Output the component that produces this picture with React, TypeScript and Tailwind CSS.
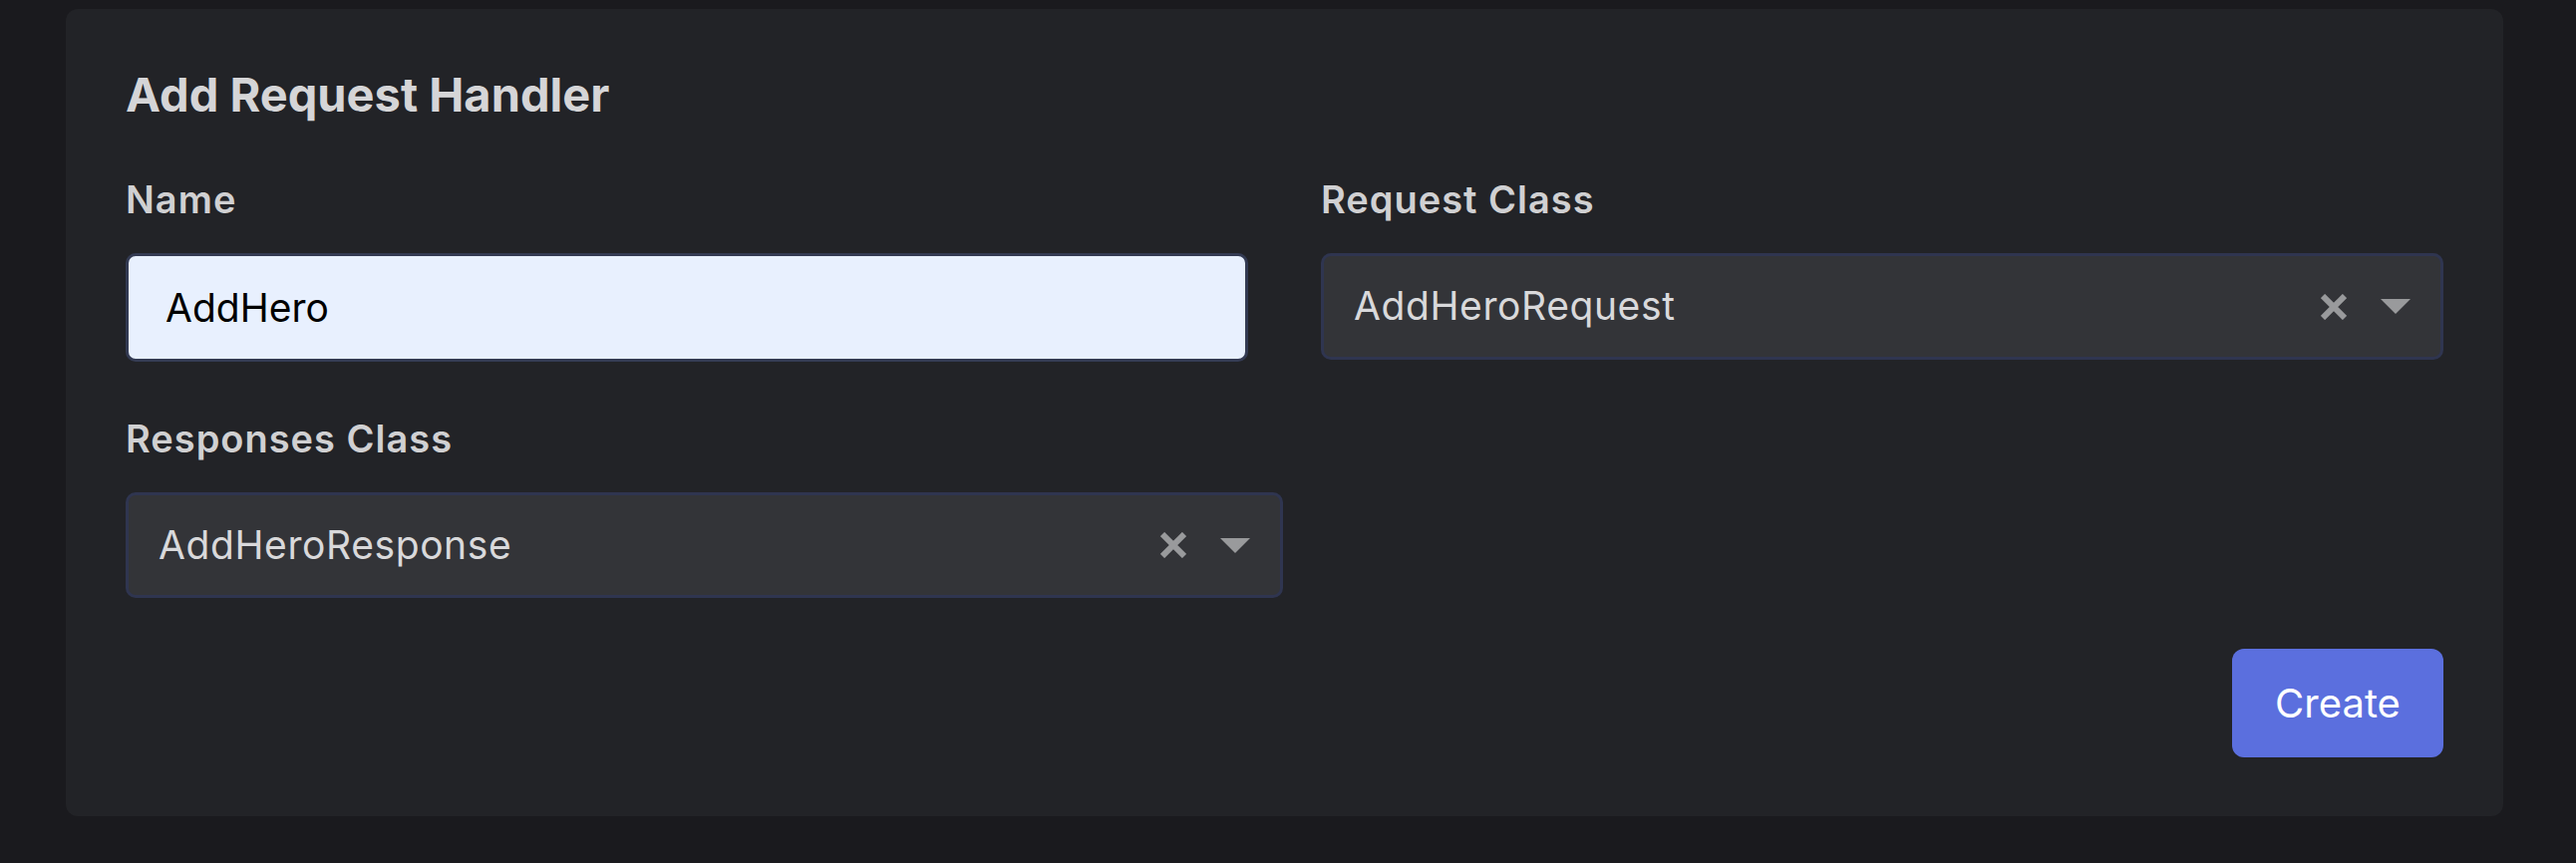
import React, { useState } from 'react';

const font = "font-['Inter','Noto_Sans',sans-serif]";

const ClearIcon: React.FC = () => (
  <svg width="26" height="26" viewBox="0 0 26 26" className="shrink-0">
    <path d="M2 2 L24 24 M24 2 L2 24" stroke="#999a9c" strokeWidth="6" strokeLinecap="butt" />
  </svg>
);

const CaretIcon: React.FC = () => (
  <svg width="30" height="15" viewBox="0 0 30 15" className="shrink-0">
    <path d="M0 0 H30 L15 15 Z" fill="#999a9c" />
  </svg>
);

const labelCls = "text-[38px] leading-[43px] font-semibold tracking-[1px] text-[#d0d0d2] mb-[32px]";

interface SelectFieldProps {
  label: string;
  value: string;
  height: string;
  onClear: () => void;
}

const SelectField: React.FC<SelectFieldProps> = ({ label, value, height, onClear }) => (
  <div className="flex flex-col">
    <label className={labelCls}>{label}</label>
    <div
      className={`flex items-center rounded-[10px] border-[3px] border-[#2f3550] bg-[#333438] pl-[30px] pr-[30px] ${height}`}
    >
      <span className="flex-1 text-[39px] tracking-[0.6px] text-[#d9d9db]">{value}</span>
      <button onClick={onClear} className="flex items-center mr-[34px]">
        <ClearIcon />
      </button>
      <CaretIcon />
    </div>
  </div>
);

const App: React.FC = () => {
  const [name, setName] = useState('AddHero');
  const [requestClass, setRequestClass] = useState('AddHeroRequest');
  const [responseClass, setResponseClass] = useState('AddHeroResponse');

  return (
    <div className={`min-h-screen bg-[#1a1a1e] pl-[66px] pr-[73px] pt-[9px] ${font}`}>
      <div className="rounded-[12px] bg-[#222327] px-[60px] pt-[57px] pb-[59px]">
        <h2 className="text-[47px] leading-[58px] font-bold text-[#d5d5d7] mb-[55px]">Add Request Handler</h2>

        <div className="grid grid-cols-2 gap-x-[73px]">
          <div className="flex flex-col">
            <label className={labelCls}>Name</label>
            <input
              value={name}
              onChange={(e) => setName(e.target.value)}
              className="h-[109px] rounded-[10px] border-[3px] border-[#333a52] bg-[#e8f0fe] px-[37px] text-[39px] text-black outline-none"
            />
          </div>
          <SelectField
            label="Request Class"
            value={requestClass}
            height="h-[107px]"
            onClear={() => setRequestClass('')}
          />
        </div>

        <div className="mt-[56px] w-[1161px]">
          <SelectField
            label="Responses Class"
            value={responseClass}
            height="h-[106px]"
            onClear={() => setResponseClass('')}
          />
        </div>

        <div className="flex justify-end mt-[51px]">
          <button className="h-[109px] w-[212px] rounded-[12px] bg-[#5b6fde] text-[40px] text-white">
            Create
          </button>
        </div>
      </div>
    </div>
  );
};

export default App;
